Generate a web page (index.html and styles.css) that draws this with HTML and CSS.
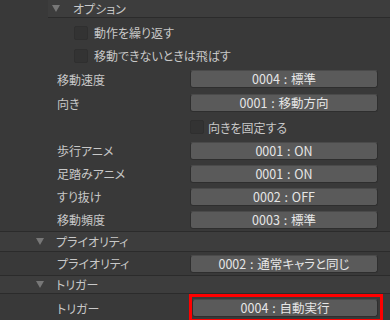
FILE: index.html
```html
<!DOCTYPE html>
<html lang="ja">
<head>
  <meta charset="UTF-8">
  <title>Inspector</title>
  <link rel="stylesheet" href="styles.css">
</head>
<body>
  <div class="panel">
    <div class="group-head sub">
      <svg class="tri" width="8" height="7" viewBox="0 0 8 7"><polygon points="0,0 8,0 4,7"/></svg>
      <span>オプション</span>
    </div>
    <div class="check-row">
      <span class="box"></span><span>動作を繰り返す</span>
    </div>
    <div class="check-row">
      <span class="box"></span><span>移動できないときは飛ばす</span>
    </div>
    <div class="row"><span class="label">移動速度</span><button class="value">0004 : 標準</button></div>
    <div class="row"><span class="label">向き</span><button class="value">0001 : 移動方向</button></div>
    <div class="row">
      <span class="label"></span>
      <div class="value-check"><span class="box"></span><span>向きを固定する</span></div>
    </div>
    <div class="row short"><span class="label">歩行アニメ</span><button class="value">0001 : ON</button></div>
    <div class="row short"><span class="label">足踏みアニメ</span><button class="value">0001 : ON</button></div>
    <div class="row short"><span class="label">すり抜け</span><button class="value">0002 : OFF</button></div>
    <div class="row short"><span class="label">移動頻度</span><button class="value">0003 : 標準</button></div>
    <div class="group-head top">
      <svg class="tri" width="8" height="7" viewBox="0 0 8 7"><polygon points="0,0 8,0 4,7"/></svg>
      <span>プライオリティ</span>
    </div>
    <div class="row short"><span class="label">プライオリティ</span><button class="value">0002 : 通常キャラと同じ</button></div>
    <div class="group-head top thin">
      <svg class="tri" width="8" height="7" viewBox="0 0 8 7"><polygon points="0,0 8,0 4,7"/></svg>
      <span>トリガー</span>
    </div>
    <div class="row trigger">
      <span class="label">トリガー</span>
      <div class="highlight"><button class="value">0004 : 自動実行</button></div>
    </div>
  </div>
</body>
</html>
```

FILE: styles.css
```css
:root {
  --bg: #393939;
  --head-bg: #3d3d3d;
  --head-line: #2b2b2b;
  --fg: #c8c8c8;
  --btn-bg: #5a5a5a;
  --btn-fg: #e6e6e6;
  --btn-edge: #2e2e2e;
  --box-bg: #333333;
  --tri: #777777;
}
html, body { margin: 0; height: 100%; }
body { background: var(--bg); color: var(--fg); font-family: "Noto Sans CJK JP", "Noto Sans", sans-serif; font-size: 12px; font-feature-settings: "palt"; overflow: hidden; }
.panel { display: flex; flex-direction: column; }

.group-head { display: flex; align-items: center; background: var(--head-bg); border-bottom: 1px solid var(--head-line); box-sizing: border-box; }
.group-head.sub { margin-left: 48px; height: 18px; padding-left: 4px; gap: 13px; margin-bottom: 3px; }
.group-head.top { height: 21px; padding-left: 36px; gap: 12px; border-top: 1px solid var(--head-line); }
.group-head.thin { height: 19px; }
.tri { fill: var(--tri); flex: none; }

.check-row { display: flex; align-items: center; height: 23px; padding-left: 74px; gap: 6px; }
.box { width: 12px; height: 12px; background: var(--box-bg); border: 1px solid #2f2f2f; border-radius: 2px; flex: none; }

.row { display: flex; align-items: center; height: 24px; padding-left: 57px; padding-right: 12px; }
.row.short { height: 23px; }
.row.trigger { height: 26px; align-items: flex-start; }
.row.trigger .label { align-self: center; margin-top: 2px; }
.label { flex: 1; }
.value { width: 188px; height: 18px; box-sizing: border-box; padding: 0; background: var(--btn-bg); color: var(--btn-fg); border: 1px solid var(--btn-edge); border-top-color: #4a4a4a; border-radius: 3px; font: inherit; font-size: 12.5px; line-height: 16px; text-align: center; word-spacing: 1px; }
.value-check { width: 188px; display: flex; align-items: center; gap: 4px; }

.highlight { display: flex; border: 3px solid #ff0000; padding: 2px 2px 2px 0; margin-left: -1px; margin-right: -5px; }
.highlight .value { width: 186px; }
```
